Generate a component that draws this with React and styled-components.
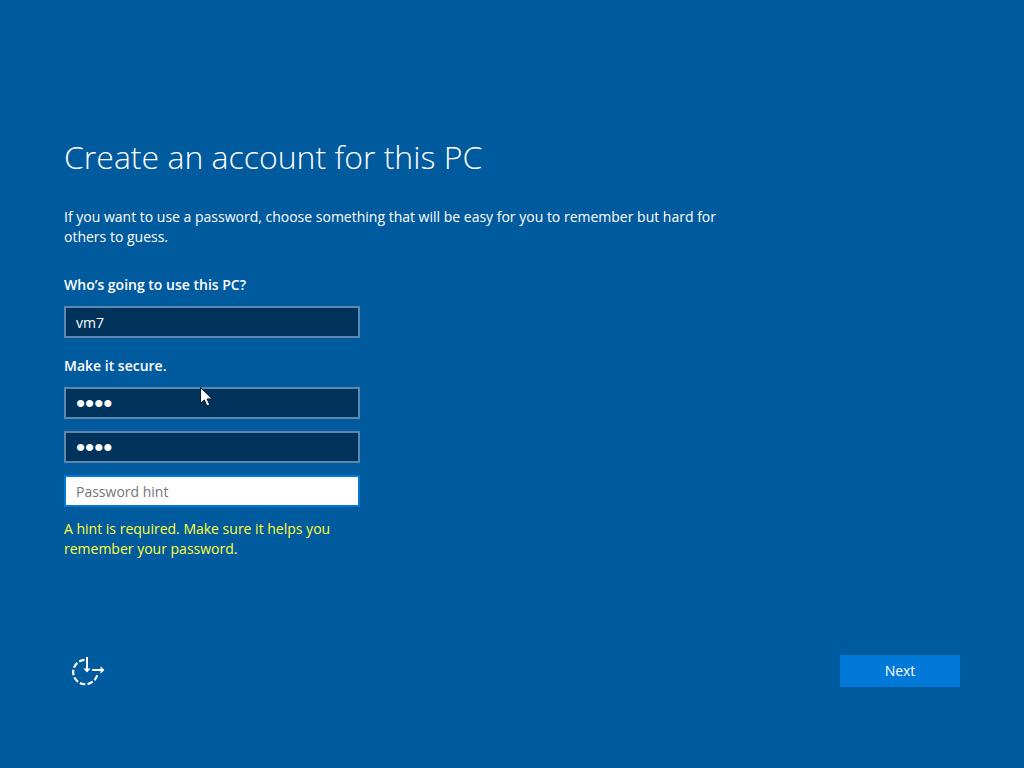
import React, { useState } from 'react';
import styled, { createGlobalStyle } from 'styled-components';

const GlobalStyle = createGlobalStyle`
  * {
    box-sizing: border-box;
  }

  body {
    margin: 0;
    background: #005a9e;
    color: #fff;
    font-family: "Open Sans", "Noto Sans", sans-serif;
    font-size: 14px;
    line-height: 20px;
  }
`;

const Page = styled.div`
  display: flex;
  flex-direction: column;
  justify-content: space-between;
  min-height: 100vh;
  padding: 133px 64px 81px;
`;

const Title = styled.h1`
  margin: 0 0 26px;
  font-size: 32px;
  font-weight: 300;
  line-height: 48px;
`;

const Paragraph = styled.p`
  max-width: 672px;
  margin: 0 0 28px;
`;

const Form = styled.form`
  display: flex;
  flex-direction: column;
  gap: 18px;
  max-width: 296px;
`;

const Group = styled.div`
  display: flex;
  flex-direction: column;
  gap: 11px;
`;

const Fields = styled.div`
  display: flex;
  flex-direction: column;
  gap: 12px;
`;

const Label = styled.label`
  font-weight: 600;
`;

const Field = styled.div`
  position: relative;
  display: flex;
`;

const Input = styled.input`
  width: 100%;
  height: 32px;
  padding: 0 10px;
  border: 2px solid ${({ $active }) => ($active ? '#0078d7' : '#5c88ad')};
  border-radius: 0;
  outline: none;
  background: ${({ $active }) => ($active ? '#fff' : '#00335c')};
  color: ${({ $active }) => ($active ? '#000' : '#fff')};
  font: inherit;

  &::placeholder {
    color: #767676;
    opacity: 1;
  }
`;

const PasswordInput = styled(Input)`
  font-family: "Liberation Sans", sans-serif;
  font-size: 26px;
`;

const Warning = styled.p`
  margin: 0;
  color: #ffff3c;
`;

const Footer = styled.footer`
  display: flex;
  align-items: center;
  justify-content: space-between;
`;

const AccessButton = styled.button`
  display: flex;
  padding: 0;
  border: 0;
  background: none;
  color: #fff;
`;

const NextButton = styled.button`
  width: 120px;
  height: 32px;
  padding: 0;
  border: 0;
  background: #0078d7;
  color: #fff;
  font: inherit;
`;

const Pointer = styled.svg`
  position: absolute;
  top: 0;
  left: 136px;
  pointer-events: none;
`;

const AccessIcon = () => (
  <svg width="48" height="32" viewBox="0 0 48 32" fill="none" stroke="currentColor" strokeWidth="2.2" aria-hidden="true">
    <path d="M20.5 4.9A12.2 12.2 0 1 0 33.4 19" strokeDasharray="5.7 2.2" />
    <path d="M23 2v13M28 15h10" strokeWidth="2" />
    <path d="M19.4 13.4h7.2L23 17.6zM36.6 11.2v7.6L40.4 15z" fill="currentColor" stroke="none" />
  </svg>
);

const MousePointer = () => (
  <Pointer width="14" height="21" viewBox="0 0 14 21" aria-hidden="true">
    <path d="M.5.5v16l3.8-3.6 2.6 6 2.8-1.2-2.6-5.8h5.2z" fill="#fff" stroke="#001c38" />
  </Pointer>
);

const App = () => {
  const [name, setName] = useState('vm7');
  const [password, setPassword] = useState('0000');
  const [confirm, setConfirm] = useState('0000');
  const [hint, setHint] = useState('');

  return (
    <>
      <GlobalStyle />
      <Page>
        <main>
          <Title>Create an account for this PC</Title>
          <Paragraph>
            If you want to use a password, choose something that will be easy for you to remember but hard for others to guess.
          </Paragraph>
          <Form id="account" onSubmit={(e) => e.preventDefault()}>
            <Group>
              <Label htmlFor="name">Who’s going to use this PC?</Label>
              <Input id="name" value={name} onChange={(e) => setName(e.target.value)} />
            </Group>
            <Group>
              <Label htmlFor="password">Make it secure.</Label>
              <Fields>
                <Field>
                  <PasswordInput
                    id="password"
                    type="password"
                    value={password}
                    onChange={(e) => setPassword(e.target.value)}
                  />
                  <MousePointer />
                </Field>
                <PasswordInput
                  type="password"
                  aria-label="Re-enter password"
                  value={confirm}
                  onChange={(e) => setConfirm(e.target.value)}
                />
                <Input
                  $active
                  aria-label="Password hint"
                  aria-describedby="hint-warning"
                  placeholder="Password hint"
                  value={hint}
                  onChange={(e) => setHint(e.target.value)}
                />
                <Warning id="hint-warning">A hint is required. Make sure it helps you remember your password.</Warning>
              </Fields>
            </Group>
          </Form>
        </main>
        <Footer>
          <AccessButton type="button" aria-label="Ease of access">
            <AccessIcon />
          </AccessButton>
          <NextButton type="submit" form="account">Next</NextButton>
        </Footer>
      </Page>
    </>
  );
};

export default App;
